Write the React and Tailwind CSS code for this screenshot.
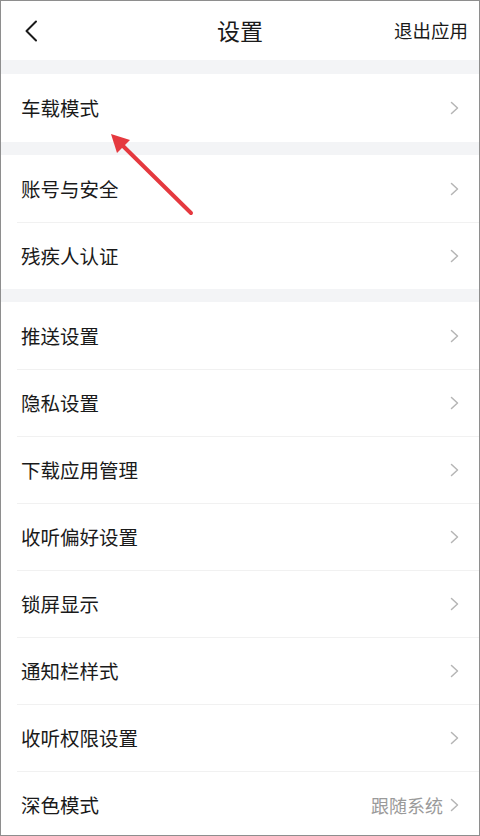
import React from "react";

const font = { fontFamily: '"Noto Sans CJK SC", "Noto Sans", sans-serif' };

function Chevron() {
  return (
    <svg width="11" height="14" viewBox="0 0 11 14" className="shrink-0">
      <path d="M2.5 1.5 L8.5 7 L2.5 12.5" fill="none" stroke="#b5b5b5" strokeWidth="1.5" strokeLinecap="round" strokeLinejoin="round" />
    </svg>
  );
}

function Row({ label, value, divider, h = "h-[67px]" }) {
  return (
    <div className="bg-white">
      {divider && <div className="ml-4 h-px bg-[#f1f1f1]" />}
      <div className={`${h} flex items-center justify-between pl-[20px] pr-[19px]`}>
        <span className="text-[19.5px] text-[#1a1a1a] leading-none">{label}</span>
        <div className="flex items-center gap-[6px]">
          {value && <span className="text-[18px] text-[#9a9a9a] leading-none">{value}</span>}
          <Chevron />
        </div>
      </div>
    </div>
  );
}

function Band({ h }) {
  return <div className={`${h} bg-[#f3f4f6]`} />;
}

export default function App() {
  const group3 = ["推送设置", "隐私设置", "下载应用管理", "收听偏好设置", "锁屏显示", "通知栏样式", "收听权限设置"];

  return (
    <div style={font} className="relative h-[836px] w-[480px] overflow-hidden border border-[#8e8e8e] bg-white">
      {/* header */}
      <div className="h-[59px] flex items-center justify-between pl-[22px] pr-[11px]">
        <svg width="16" height="22" viewBox="0 0 16 22">
          <path d="M13 1.5 L3.5 11 L13 20.5" fill="none" stroke="#1a1a1a" strokeWidth="2" strokeLinecap="round" strokeLinejoin="round" />
        </svg>
        <span className="absolute left-1/2 top-[29px] -translate-x-1/2 -translate-y-1/2 text-[23px] text-[#1a1a1a] leading-none">设置</span>
        <span className="text-[18.5px] text-[#1a1a1a] leading-none">退出应用</span>
      </div>

      <Band h="h-[14px]" />
      <Row label="车载模式" h="h-[68px]" />
      <Band h="h-[13px]" />
      <Row label="账号与安全" />
      <Row label="残疾人认证" divider h="h-[66px]" />
      <Band h="h-[13px]" />
      {group3.map((t, i) => (
        <Row key={t} label={t} divider={i > 0} h={i > 0 ? "h-[66px]" : "h-[67px]"} />
      ))}
      <Row label="深色模式" value="跟随系统" divider h="h-[66px]" />

      {/* annotation arrow */}
      <svg className="absolute left-0 top-0 pointer-events-none" width="480" height="836">
        <line x1="190" y1="212" x2="121" y2="144" stroke="#e5393f" strokeWidth="4" strokeLinecap="round" />
        <polygon points="110,133 129,139 116,152" fill="#e5393f" />
      </svg>
    </div>
  );
}
